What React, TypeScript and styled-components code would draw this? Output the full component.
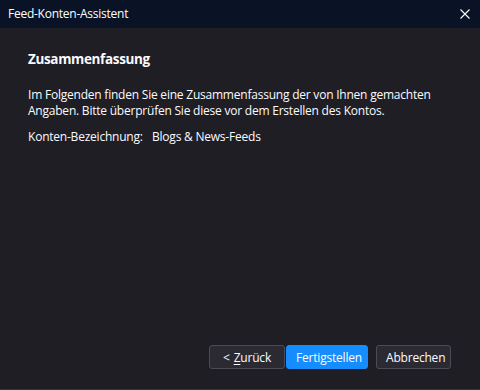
import React from "react";
import styled, { createGlobalStyle } from "styled-components";

const Global = createGlobalStyle`
  html, body { margin: 0; padding: 0; background: #1f1e25; }
  body { font-family: "Segoe UI", "Open Sans", "Noto Sans", sans-serif; }
  #root { width: 480px; height: 390px; }
`;

const Window = styled.div`
  width: 480px;
  height: 390px;
  display: flex;
  flex-direction: column;
  background: #1f1e25;
  color: #fbfbfe;
  box-sizing: border-box;
  border-bottom: 1px solid #2a3550;
`;

const TitleBar = styled.div`
  height: 28px;
  flex: none;
  display: flex;
  align-items: center;
  justify-content: space-between;
  background: #0a1326;
  padding: 0 10px 0 8px;
  font-size: 12px;
  color: #ffffff;
`;

const TitleText = styled.span`
  letter-spacing: -0.25px;
  margin-top: -1px;
`;

const CloseIcon = styled.svg`
  width: 10px;
  height: 10px;
  display: block;
`;

const Content = styled.div`
  flex: 1;
  padding: 22px 28px 0 28px;
  display: flex;
  flex-direction: column;
`;

const Heading = styled.h1`
  margin: 0 0 19px 0;
  font-size: 13.5px;
  font-weight: 700;
  line-height: 18px;
  letter-spacing: -0.35px;
`;

const Paragraph = styled.p`
  margin: 0 0 10px 0;
  font-size: 12px;
  line-height: 16px;
  letter-spacing: -0.22px;
`;

const Row = styled.div`
  display: flex;
  font-size: 12px;
  line-height: 16px;
  letter-spacing: -0.22px;
`;

const Label = styled.span`
  width: 124px;
`;

const Footer = styled.div`
  flex: none;
  display: flex;
  justify-content: flex-end;
  align-items: center;
  padding: 0 29px 20px 0;
`;

const Button = styled.button<{ $primary?: boolean; $gap?: number }>`
  height: 24px;
  box-sizing: border-box;
  padding: 0 9px;
  margin-left: ${(p) => p.$gap ?? 0}px;
  border-radius: 3px;
  font-family: inherit;
  font-size: 12px;
  letter-spacing: -0.2px;
  color: #fbfbfe;
  background: ${(p) => (p.$primary ? "#168dff" : "#2b2a33")};
  border: 1px solid ${(p) => (p.$primary ? "#168dff" : "#4c4b53")};
`;

const Mnemonic = styled.span`
  text-decoration: underline;
  text-underline-offset: 2px;
`;

const Arrow = styled.span`
  margin-right: 4px;
`;

export default function App() {
  return (
    <>
      <Global />
      <Window>
        <TitleBar>
          <TitleText>Feed-Konten-Assistent</TitleText>
          <CloseIcon viewBox="0 0 10 10">
            <path d="M0.5 0.5 L9.5 9.5 M9.5 0.5 L0.5 9.5" stroke="#ffffff" strokeWidth="1.1" />
          </CloseIcon>
        </TitleBar>
        <Content>
          <Heading>Zusammenfassung</Heading>
          <Paragraph>
            Im Folgenden finden Sie eine Zusammenfassung der von Ihnen gemachten
            <br />
            Angaben. Bitte überprüfen Sie diese vor dem Erstellen des Kontos.
          </Paragraph>
          <Row>
            <Label>Konten-Bezeichnung:</Label>
            <span>Blogs &amp; News-Feeds</span>
          </Row>
        </Content>
        <Footer>
          <Button style={{ width: 76 }}>
            <Arrow>&lt;</Arrow>
            <Mnemonic>Z</Mnemonic>urück
          </Button>
          <Button $primary $gap={1} style={{ width: 82 }}>
            Fertigstellen
          </Button>
          <Button $gap={8} style={{ width: 75 }}>
            Abbrechen
          </Button>
        </Footer>
      </Window>
    </>
  );
}
